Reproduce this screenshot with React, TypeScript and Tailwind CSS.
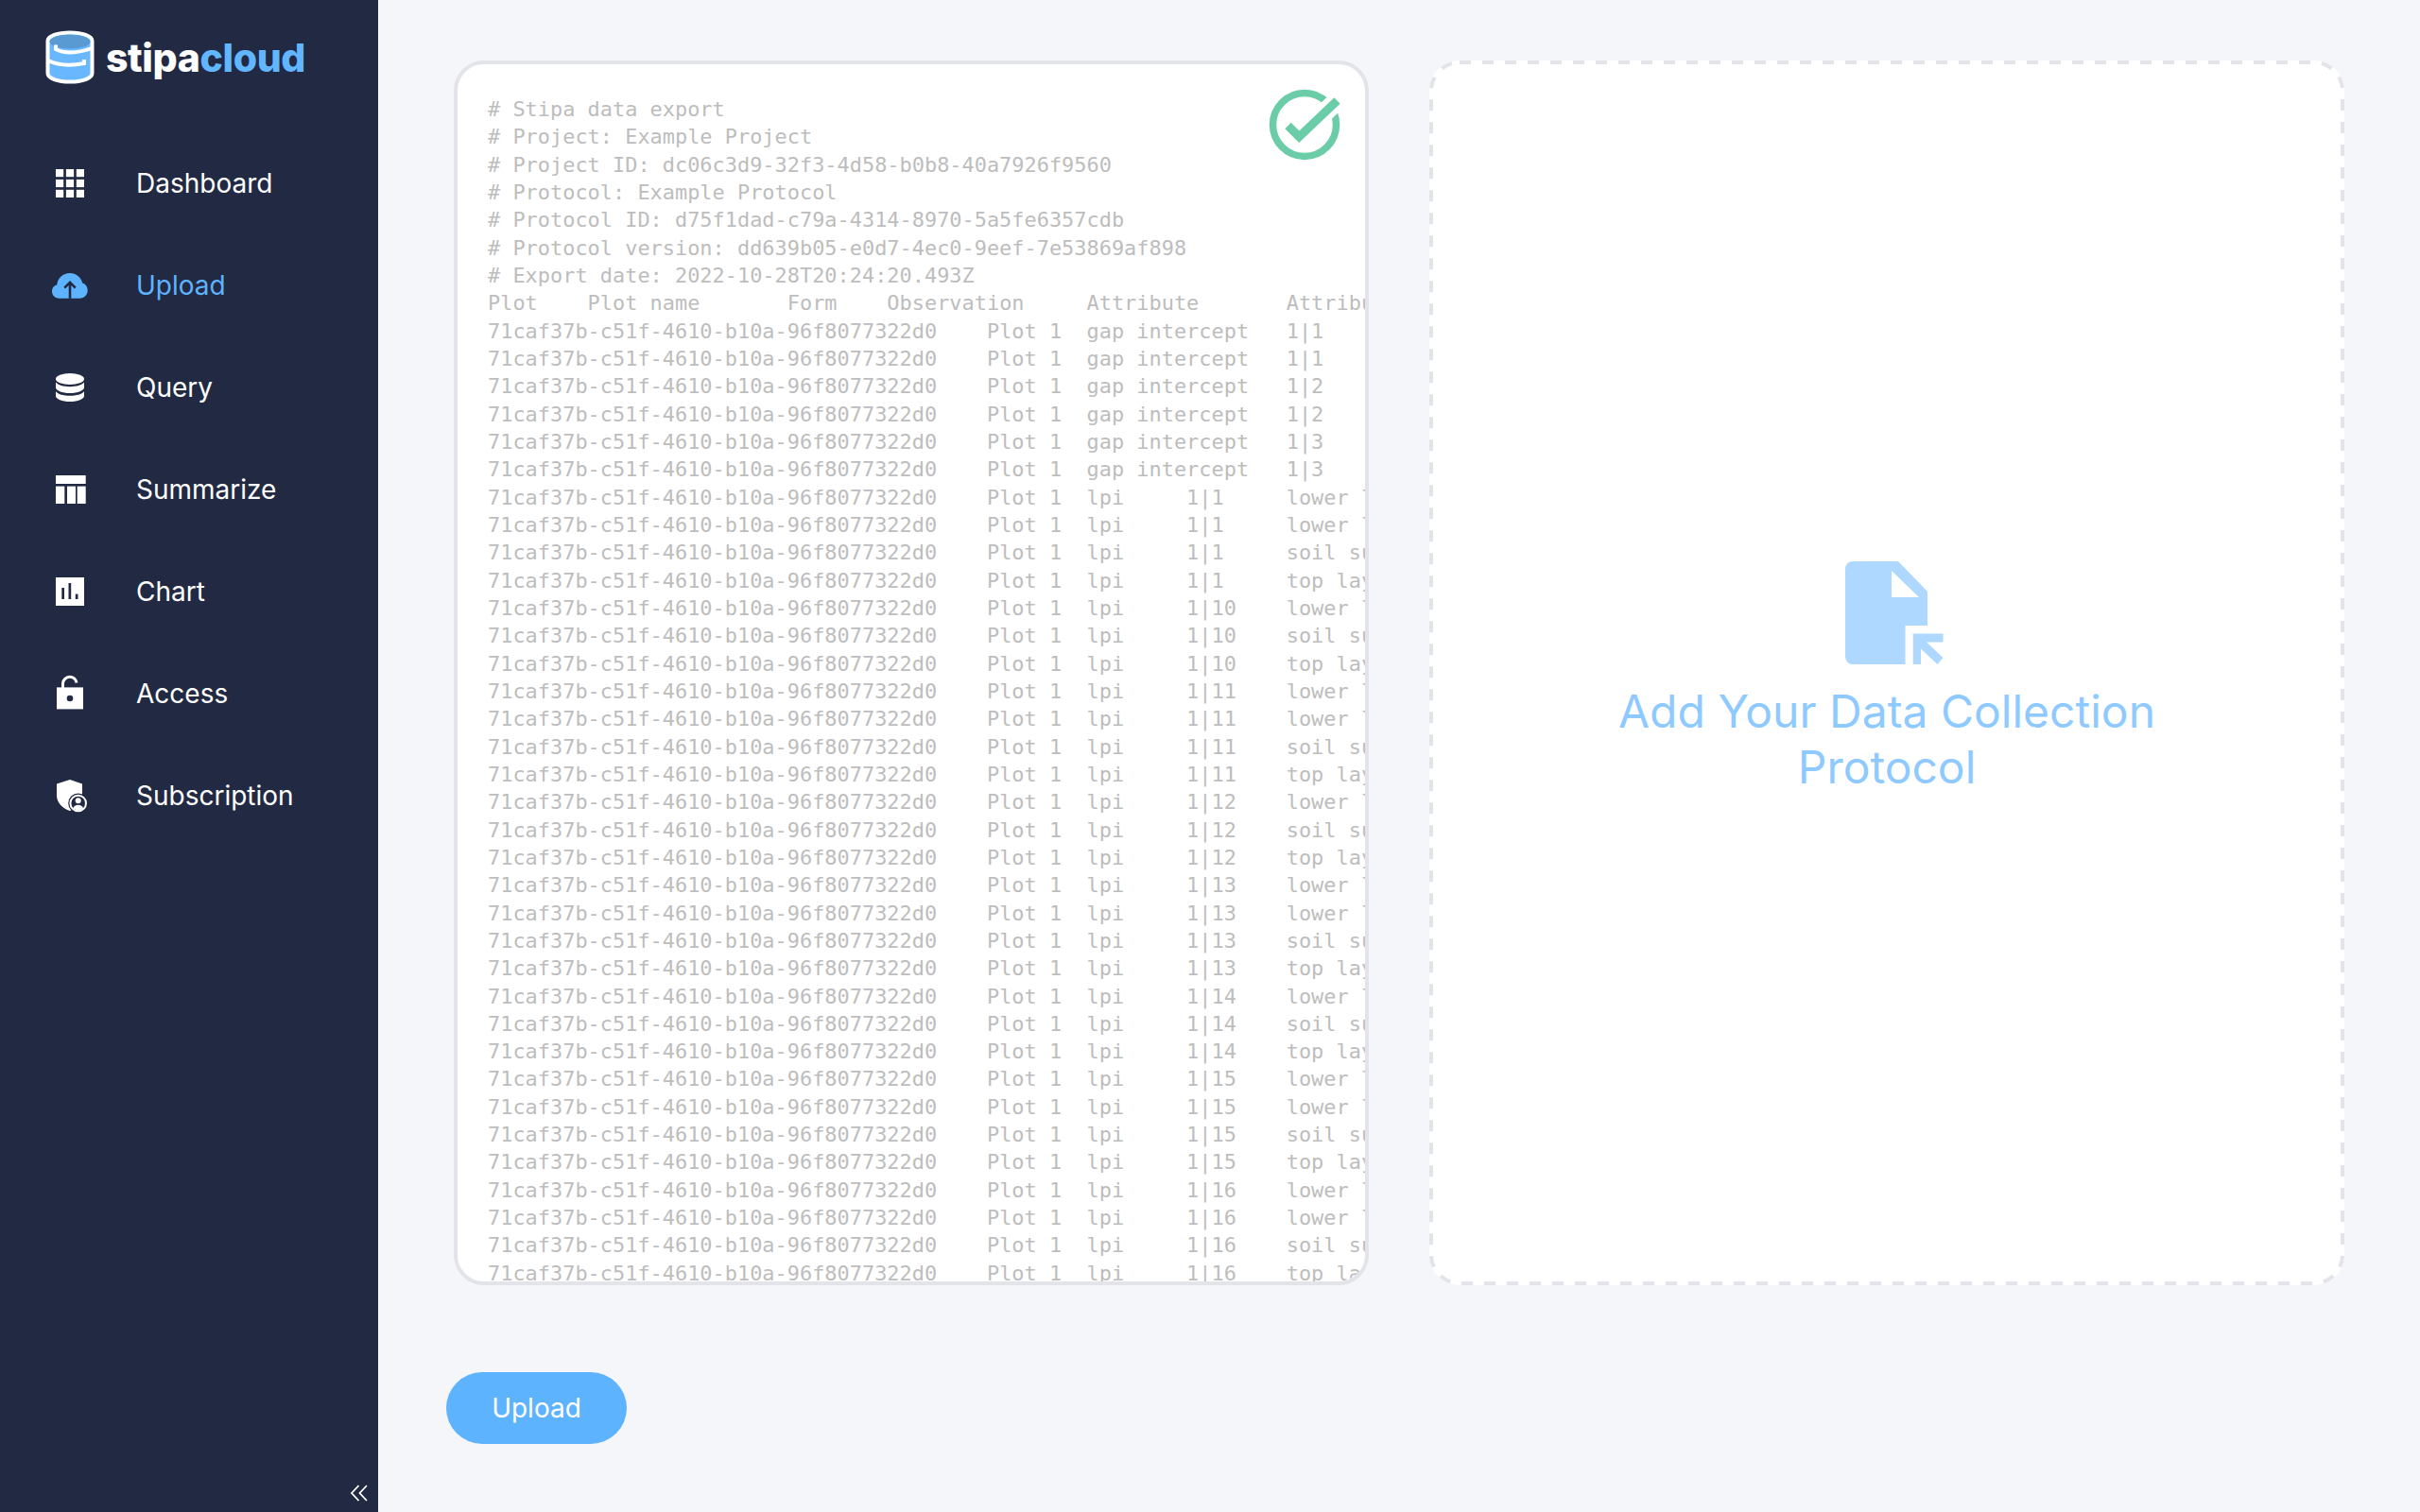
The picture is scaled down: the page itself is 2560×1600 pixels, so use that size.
import React from 'react';

const uuid = '71caf37b-c51f-4610-b10a-96f8077322d0';
const lpi: [string, string[]][] = [
  ['1|1', ['lower layer', 'lower layer', 'soil surface', 'top layer']],
  ['1|10', ['lower layer', 'soil surface', 'top layer']],
  ['1|11', ['lower layer', 'lower layer', 'soil surface', 'top layer']],
  ['1|12', ['lower layer', 'soil surface', 'top layer']],
  ['1|13', ['lower layer', 'lower layer', 'soil surface', 'top layer']],
  ['1|14', ['lower layer', 'soil surface', 'top layer']],
  ['1|15', ['lower layer', 'lower layer', 'soil surface', 'top layer']],
  ['1|16', ['lower layer', 'lower layer', 'soil surface', 'top layer']],
];

const exportText = [
  '# Stipa data export',
  '# Project: Example Project',
  '# Project ID: dc06c3d9-32f3-4d58-b0b8-40a7926f9560',
  '# Protocol: Example Protocol',
  '# Protocol ID: d75f1dad-c79a-4314-8970-5a5fe6357cdb',
  '# Protocol version: dd639b05-e0d7-4ec0-9eef-7e53869af898',
  '# Export date: 2022-10-28T20:24:20.493Z',
  'Plot\tPlot name\tForm\tObservation\tAttribute\tAttribute value\tValue',
  ...['1|1', '1|1', '1|2', '1|2', '1|3', '1|3'].map((o) => `${uuid}\tPlot 1\tgap intercept\t${o}\tgap start`),
  ...lpi.flatMap(([o, attrs]) => attrs.map((a) => `${uuid}\tPlot 1\tlpi\t${o}\t${a}`)),
].join('\n');

const navIcon = 'w-10 h-10 shrink-0';

const icons = {
  grid: (
    <svg viewBox="0 0 40 40" className={navIcon} fill="currentColor">
      {[5, 15.9, 26.8].flatMap((y) =>
        [5, 15.9, 26.8].map((x) => <rect key={`${x}-${y}`} x={x} y={y} width="8.2" height="8.2" />)
      )}
    </svg>
  ),
  cloud: (
    <svg viewBox="0 0 40 40" className={navIcon}>
      <path
        fill="currentColor"
        d="M8.5 33.7C4.2 33.7 1 30.4 1 26.3c0-3.4 2.2-6.2 5.3-7.1C7 12.2 12.8 7 20 7c6.4 0 11.8 4.4 13.2 10.6 3.2.9 5.5 4 5.5 7.6 0 4.8-3.6 8.5-8.2 8.5z"
      />
      <path fill="none" stroke="#212a42" strokeWidth="2.6" d="M20 33.7V17M14.2 22.6 20 16.8l5.8 5.8" />
    </svg>
  ),
  database: (
    <svg viewBox="0 0 40 40" className={navIcon} fill="currentColor">
      <ellipse cx="20" cy="11" rx="15" ry="6" />
      <path d="M5 14.6c2.4 3 8 4.6 15 4.6s12.6-1.6 15-4.6V20c0 3.3-6.7 6-15 6S5 23.3 5 20z" />
      <path d="M5 24.3c2.4 3 8 4.5 15 4.5s12.6-1.5 15-4.5V29c0 3.3-6.7 6-15 6S5 32.3 5 29z" />
    </svg>
  ),
  table: (
    <svg viewBox="0 0 40 40" className={navIcon} fill="currentColor">
      <rect x="5" y="5" width="31.7" height="9" />
      <rect x="5" y="16.6" width="9.3" height="18.4" />
      <rect x="17" y="16.6" width="9" height="18.4" />
      <rect x="27.7" y="16.6" width="9" height="18.4" />
    </svg>
  ),
  chart: (
    <svg viewBox="0 0 40 40" className={navIcon}>
      <rect x="5" y="5" width="30" height="30" fill="currentColor" />
      <rect x="11.3" y="16" width="2.7" height="12" fill="#212a42" />
      <rect x="18.5" y="11" width="2.7" height="17" fill="#212a42" />
      <rect x="25.8" y="22.6" width="2.7" height="5.4" fill="#212a42" />
    </svg>
  ),
  lock: (
    <svg viewBox="0 0 40 40" className={navIcon}>
      <path d="M12.5 14V9A7.3 7.3 0 0 1 27 8.5" fill="none" stroke="currentColor" strokeWidth="3" />
      <rect x="6" y="13.4" width="28" height="23" fill="currentColor" />
      <circle cx="20" cy="25" r="3.3" fill="#212a42" />
    </svg>
  ),
  shield: (
    <svg viewBox="0 0 40 40" className={navIcon}>
      <path fill="currentColor" d="M20 3 33 7.5V20c0 8-5.5 13.5-13 16C12 33.5 6 27.5 6 19.5V7.5z" />
      <circle cx="28.7" cy="28" r="10.5" fill="#212a42" />
      <circle cx="28.7" cy="28" r="8.3" fill="none" stroke="currentColor" strokeWidth="2" />
      <circle cx="28.7" cy="25.3" r="3" fill="currentColor" />
      <path fill="currentColor" d="M23.2 33.5c.8-2.6 3-3.8 5.5-3.8s4.7 1.2 5.5 3.8c-1.4 1.1-3.4 1.8-5.5 1.8s-4.1-.7-5.5-1.8z" />
    </svg>
  ),
};

const navItems = [
  { label: 'Dashboard', icon: icons.grid },
  { label: 'Upload', icon: icons.cloud, active: true },
  { label: 'Query', icon: icons.database },
  { label: 'Summarize', icon: icons.table },
  { label: 'Chart', icon: icons.chart },
  { label: 'Access', icon: icons.lock },
  { label: 'Subscription', icon: icons.shield },
];

function Logo() {
  return (
    <svg viewBox="0 0 52 57" className="w-[52px] h-[57px] shrink-0">
      <path
        d="M2.5 11.5C2.5 6 13 2.5 26 2.5S49.5 6 49.5 11.5v34C49.5 51 39 54.5 26 54.5S2.5 51 2.5 45.5z"
        fill="#69b7ff"
        stroke="#fff"
        strokeWidth="4"
      />
      <ellipse cx="26" cy="12" rx="21.5" ry="7.5" fill="#5a9ad3" />
      <path d="M11 15.5V20c8 4.5 22 5 38-1" fill="none" stroke="#fff" strokeWidth="4" />
      <path d="M3 32c10 5 25 5.5 38 3v-4" fill="none" stroke="#fff" strokeWidth="4" />
    </svg>
  );
}

function App() {
  return (
    <div className="flex h-[1600px] overflow-hidden bg-[#f4f6fa] font-['Inter',sans-serif]">
      {/* Sidebar */}
      <aside className="relative w-[400px] shrink-0 bg-[#212a42] text-white">
        <div className="flex items-center gap-[12px] h-[140px] pl-[48px] pb-[20px]">
          <Logo />
          <span className="mt-[3px] text-[41px] font-extrabold tracking-[-0.4px]">
            stipa<span className="text-[#62b5ff]">cloud</span>
          </span>
        </div>
        <nav className="flex flex-col">
          {navItems.map((item) => (
            <div
              key={item.label}
              className={`flex items-center gap-[50px] h-[108px] pl-[54px] text-[28px] ${
                item.active ? 'text-[#5eb3ff]' : 'text-white'
              }`}
            >
              {item.icon}
              <span>{item.label}</span>
            </div>
          ))}
        </nav>
        <svg viewBox="0 0 20 18" className="absolute left-[370px] top-[1571px] w-5 h-[18px]" fill="none" stroke="currentColor" strokeWidth="1.8">
          <path d="M9.5 1 2 9l7.5 8M18 1l-7.5 8 7.5 8" />
        </svg>
      </aside>

      {/* Main */}
      <main className="flex-1 flex flex-col pt-[64px] pl-[80px] pr-[80px]">
        <div className="flex gap-[64px] h-[1296px]">
          <div className="relative w-[968px] rounded-[32px] border-4 border-[#e2e4ea] bg-white overflow-hidden pt-[33px] pl-[32px]">
            <pre className="font-['DejaVu_Sans_Mono',monospace] text-[21.93px] leading-[29.33px] text-[#bdbdbd] whitespace-pre [tab-size:8]">
              {exportText}
            </pre>
            <svg viewBox="0 0 80 80" className="absolute top-[24px] right-[24px] w-20 h-20">
              <circle cx="40" cy="40" r="33.5" fill="none" stroke="#6bcca8" strokeWidth="7.5" />
              <path d="M22.5 41 34.3 52.8 76 13" fill="none" stroke="#fff" strokeWidth="20" strokeLinecap="butt" />
              <path d="M22.5 41 34.3 52.8 74.5 14.5" fill="none" stroke="#6bcca8" strokeWidth="9" />
            </svg>
          </div>
          <div className="relative w-[968px] rounded-[32px] bg-white flex flex-col items-center justify-center pt-[10px]">
            <svg viewBox="0 0 968 1296" className="absolute inset-0 w-full h-full" fill="none">
              <rect x="2" y="2" width="964" height="1292" rx="30" stroke="#e2e4ea" strokeWidth="4" strokeDasharray="12 12" />
            </svg>
            <svg viewBox="0 0 104 110" className="w-[104px] h-[110px] ml-[16px] mb-[20px]" fill="#aed8ff">
              <path fillRule="evenodd" d="M8 1H56L87 33V69H63.5V110H8a8 8 0 0 1-8-8V9a8 8 0 0 1 8-8zM49 11V39H78z" />
              <path d="M71.7 77.5H103.5V86.5H86L103.5 103 97.4 110 80 93.5V110H71.7z" />
            </svg>
            <div className="w-[640px] text-center text-[48px] font-normal leading-[59px] text-[#8ecaff]">
              Add Your Data Collection Protocol
            </div>
          </div>
        </div>
        <button className="self-start mt-[92px] -ml-[8px] w-[191px] h-[76px] rounded-[38px] bg-[#5eb3ff] text-white text-[28px]">
          Upload
        </button>
      </main>
    </div>
  );
}

export default App;
